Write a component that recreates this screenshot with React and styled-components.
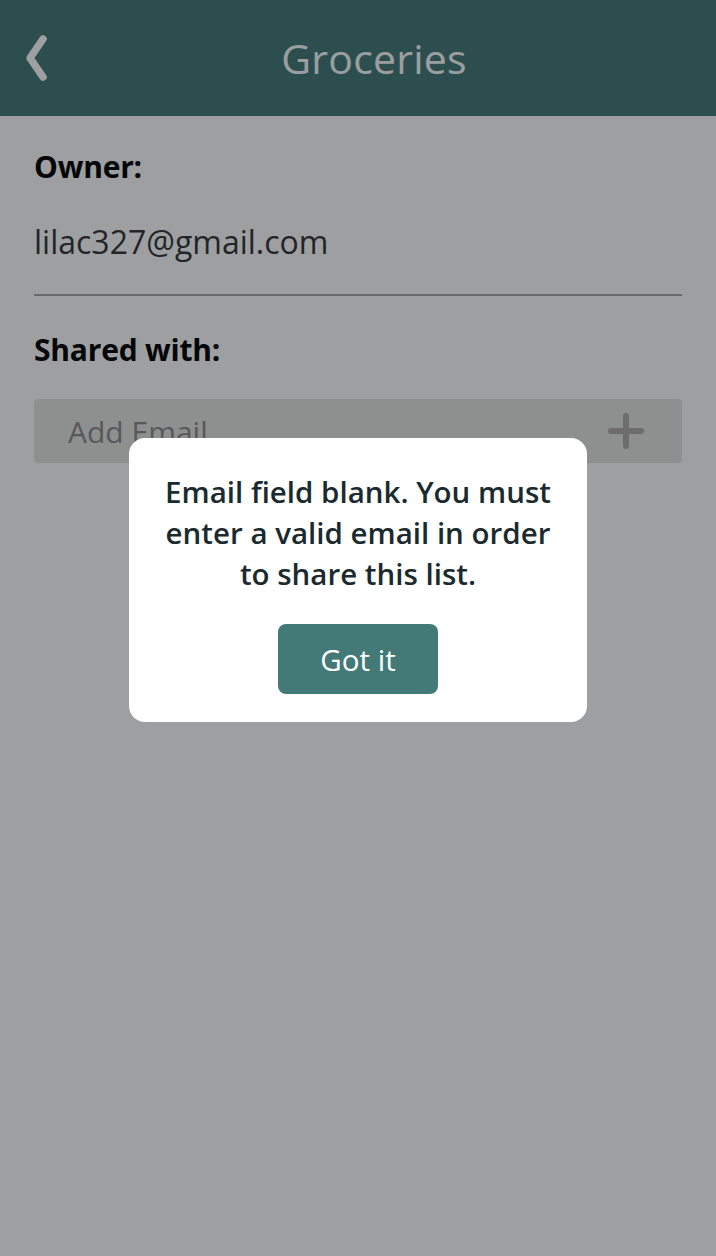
import React from 'react';
import styled, { createGlobalStyle } from 'styled-components';

const GlobalStyle = createGlobalStyle`
  html, body {
    margin: 0;
    padding: 0;
    background: #ffffff;
    font-family: "Open Sans", "Liberation Sans", sans-serif;
  }
  * { box-sizing: border-box; }
`

export default function App() {
  return (
    <>
      <GlobalStyle />
      <Page>
        <Header>
          <BackButton aria-label="Back">
            <svg width="30" height="50" viewBox="0 0 30 50">
              <polyline
                points="19,6 6,25 19,44"
                fill="none"
                stroke="currentColor"
                strokeWidth="7.5"
                strokeLinecap="round"
                strokeLinejoin="round"
              />
            </svg>
          </BackButton>
          <Title>Groceries</Title>
        </Header>
        <Content>
          <Label>Owner:</Label>
          <OwnerEmail>lilac327@gmail.com</OwnerEmail>
          <Label>Shared with:</Label>
          <AddRow>
            <EmailInput type="text" placeholder="Add Email" />
            <AddButton aria-label="Add">
              <svg width="36" height="36" viewBox="0 0 36 36">
                <path
                  d="M18 3 V33 M3 18 H33"
                  stroke="currentColor"
                  strokeWidth="6"
                  strokeLinecap="round"
                />
              </svg>
            </AddButton>
          </AddRow>
        </Content>
      </Page>
      <Backdrop>
        <Dialog>
          <Message>
            Email field blank. You must enter a valid email in order to share this list.
          </Message>
          <OkButton>Got it</OkButton>
        </Dialog>
      </Backdrop>
    </>
  )
}

const Page = styled.div`
  min-height: 1256px;
  background: #ffffff;
`

const Header = styled.header`
  height: 116px;
  background: #447978;
  display: flex;
  align-items: center;
  padding: 0 20px 0 24px;
`

const BackButton = styled.button`
  border: none;
  background: none;
  padding: 0;
  width: 36px;
  display: flex;
  align-items: center;
  color: #ffffff;
  margin-right: -36px;
`

const Title = styled.h1`
  flex: 1;
  margin: 0;
  padding-left: 28px;
  text-align: center;
  font-size: 41px;
  font-weight: 400;
  color: #fbfdfc;
  letter-spacing: 0.2px;
`

const Content = styled.main`
  padding: 31px 34px 24px;
`

const Label = styled.h2`
  margin: 0;
  font-size: 30px;
  font-weight: 700;
  color: #000000;
  line-height: 40px;
  letter-spacing: -0.2px;
`

const OwnerEmail = styled.p`
  margin: 35px 0 34px;
  padding-bottom: 32px;
  font-size: 32px;
  line-height: 40px;
  color: #343537;
  border-bottom: 2px solid #aaa9aa;
`

const AddRow = styled.div`
  margin-top: 29px;
  height: 64px;
  display: flex;
  align-items: center;
  background: #e6e4e3;
  border-radius: 4px;
  padding: 0 38px 0 34px;
`

const EmailInput = styled.input`
  flex: 1;
  border: none;
  background: transparent;
  outline: none;
  font-family: inherit;
  font-size: 30px;
  color: #343537;
  padding: 0;
  &::placeholder { color: #8c8b8a; }
`

const AddButton = styled.button`
  border: none;
  background: none;
  padding: 0;
  display: flex;
  color: #b2aaaa;
`

const Backdrop = styled.div`
  position: fixed;
  inset: 0;
  background: rgba(10, 16, 18, 0.4);
  display: flex;
  justify-content: center;
  align-items: flex-start;
  padding-top: 438px;
`

const Dialog = styled.div`
  width: 458px;
  height: 284px;
  background: #ffffff;
  border-radius: 16px;
  padding: 33px 24px 28px;
  display: flex;
  flex-direction: column;
  align-items: center;
`

const Message = styled.p`
  margin: 0;
  text-align: center;
  font-size: 29.5px;
  font-weight: 600;
  line-height: 41px;
  color: #1b2a2e;
`

const OkButton = styled.button`
  margin-top: 30px;
  width: 160px;
  height: 70px;
  border: none;
  border-radius: 8px;
  background: #437a78;
  color: #ffffff;
  font-family: inherit;
  font-size: 29.5px;
  font-weight: 400;
`
